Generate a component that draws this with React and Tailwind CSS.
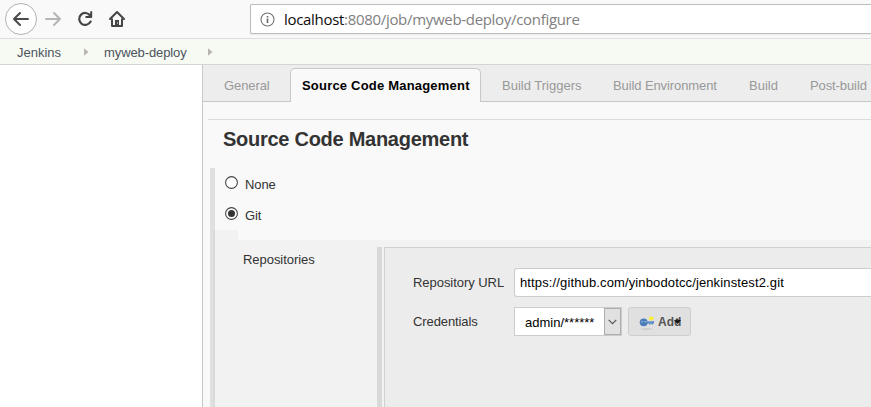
import React from "react";

const TABS_AFTER = [
  { label: "Build Triggers", cls: "w-[79px] ml-[21px]" },
  { label: "Build Environment", cls: "w-[104px] ml-8 tracking-[-0.1px]" },
  { label: "Build", cls: "w-[29px] ml-8" },
  { label: "Post-build", cls: "w-[60px] ml-8 tracking-[-0.1px]" },
];

function Toolbar() {
  return (
    <header className="flex h-[39px] shrink-0 items-start border-b border-[#dedede] bg-[#f9f9f9]">
      <svg width="130" height="38" viewBox="0 0 130 38" fill="none" className="shrink-0">
        <circle cx="21" cy="19" r="15.5" fill="#fff" stroke="#b1b1b1" />
        <path d="M28 19H14M20 13L14 19L20 25" stroke="#4a4a4a" strokeWidth="2" strokeLinecap="round" strokeLinejoin="round" />
        <path d="M46 19H60M54 13L60 19L54 25" stroke="#b5b5b5" strokeWidth="2" strokeLinecap="round" strokeLinejoin="round" />
        <path d="M90.2 15.6A6 6 0 1 0 90.6 21.6" stroke="#454545" strokeWidth="2.2" strokeLinecap="round" />
        <path d="M91.2 12V17H86.2" stroke="#454545" strokeWidth="2" strokeLinecap="round" strokeLinejoin="round" />
        <path d="M91 13.5V17H87.5Z" fill="#454545" />
        <path d="M110 19L117 12L124 19" stroke="#454545" strokeWidth="2" strokeLinecap="round" strokeLinejoin="round" />
        <path d="M112 18.5V26H122V18.5" stroke="#454545" strokeWidth="2" strokeLinejoin="round" />
        <path d="M115 26V20H119V26Z" fill="#454545" />
        <rect x="117" y="22.5" width="1" height="1" fill="#fff" />
      </svg>
      <div className="mt-1 ml-[120px] flex h-[30px] flex-1 items-center rounded-l-xs border border-r-0 border-[#bcbcbc] bg-white pl-[9px] shadow-[0_1px_2px_rgba(0,0,0,0.06)]">
        <svg width="15" height="15" viewBox="0 0 15 15" fill="none" className="shrink-0">
          <circle cx="7.5" cy="7.5" r="6.5" stroke="#737373" strokeWidth="1.1" />
          <path d="M7.5 6.6V11M7.5 4V5.4" stroke="#666" strokeWidth="1.6" />
        </svg>
        <span className="ml-[9px] font-['Open_Sans',sans-serif] text-[15px] leading-5 tracking-[-0.31px] whitespace-nowrap text-[#808080]">
          <span className="text-[#0c0c0d]">localhost</span>:8080/job/myweb-deploy/configure
        </span>
      </div>
    </header>
  );
}

function Crumb() {
  return (
    <svg width="5" height="8" viewBox="0 0 5 8" className="shrink-0">
      <path d="M0 0.3L4.5 4L0 7.7Z" fill="#b9b5b0" />
    </svg>
  );
}

function Breadcrumbs() {
  return (
    <nav className="flex h-[26px] shrink-0 items-center border-b border-[#d3d7cf] bg-[#f6faf2] pl-[17px] text-[#4d545d]">
      <span className="w-[67px] pt-0.5">Jenkins</span>
      <Crumb />
      <span className="ml-[15px] w-[104px] pt-0.5 tracking-[-0.1px]">myweb-deploy</span>
      <Crumb />
    </nav>
  );
}

function Tabs() {
  return (
    <div className="flex h-[37px] shrink-0 border-b border-[#c8c8c8] bg-[#ededed] whitespace-nowrap text-[#999]">
      <span className="ml-[21px] w-[66px] shrink-0 leading-[41px] tracking-[-0.1px]">General</span>
      <div className="mt-[3px] h-[34px] w-[191px] shrink-0 rounded-t-[5px] border border-b-0 border-[#c8c8c8] bg-[#f9f9f9] pl-[11px] leading-[33px] font-bold tracking-[0.2px] text-black shadow-[0_1px_0_#f9f9f9]">
        Source Code Management
      </div>
      {TABS_AFTER.map((t) => (
        <span key={t.label} className={`shrink-0 leading-[41px] ${t.cls}`}>
          {t.label}
        </span>
      ))}
    </div>
  );
}

function Radio({ label, checked }) {
  return (
    <label className="flex h-8 items-start">
      <svg width="13" height="13" viewBox="0 0 13 13" className="shrink-0">
        <circle cx="6.5" cy="6.5" r="5.9" fill="#fff" stroke="#444" strokeWidth="1.1" />
        {checked && <circle cx="6.5" cy="6.5" r="3.5" fill="#333" />}
      </svg>
      <span className="mt-px ml-[7px] leading-4 tracking-[-0.1px]">{label}</span>
    </label>
  );
}

function AddButton() {
  return (
    <div className="ml-1.5 flex h-[29px] w-[63px] items-center rounded-[3px] border border-[#cdcdcd] bg-[#e0e0e0] pl-2.5">
      <svg width="16" height="16" viewBox="0 0 16 16" className="mt-0.5 shrink-0">
        <ellipse cx="7.5" cy="14" rx="6" ry="0.8" fill="#c8c8c8" />
        <path d="M6 6H15V8.5H14V9.5H12.5V8.5H11.5V9.5H10V8.5H6Z" fill="#5a89c4" />
        <ellipse cx="4.7" cy="7.3" rx="4" ry="3.9" fill="#4c7dbb" />
        <path d="M5 6.7H14" stroke="#85abd8" />
        <circle cx="3" cy="6.8" r="1" fill="#86a9d2" />
        <path d="M12 0.8L13 2L14.6 2L14.3 3.3L15 4.8L13.3 4.7L12 6L11 4.7L9.5 4.4L10.4 3L10 1.7L11.4 1.8Z" fill="#fbed38" />
      </svg>
      <span className="relative ml-[3px] text-xs leading-4 font-bold text-[#555]">
        Add
        <svg width="7" height="7" viewBox="0 0 7 7" className="absolute top-1 right-0">
          <path d="M0 2H7L3.5 6Z" fill="#111" />
          <path d="M3 0V3" stroke="#333" />
        </svg>
      </span>
    </div>
  );
}

function Repository() {
  return (
    <div className="flex flex-1 flex-col border-t border-l border-[#d0d0d0] bg-[#ececec] pt-5 pl-7">
      <div className="flex h-[39px] items-start">
        <span className="w-[101px] shrink-0 leading-[29px] tracking-[-0.05px]">Repository URL</span>
        <div className="h-[29px] flex-1 rounded-l-[3px] border border-r-0 border-[#ccc] bg-white pl-[5px] leading-[27px] tracking-[0.13px] whitespace-nowrap text-black">
          https://github.com/yinbodotcc/jenkinstest2.git
        </div>
      </div>
      <div className="flex items-start">
        <span className="w-[101px] shrink-0 leading-[29px] tracking-[-0.1px]">Credentials</span>
        <div className="flex h-[29px] w-[108px] shrink-0 border border-[#ccc] bg-white text-black">
          <span className="w-[89px] pl-2.5 leading-[29px]">admin/******</span>
          <span className="flex w-[17px] items-center justify-center border border-[#adadad] bg-[#e1e1e1]">
            <svg width="9" height="6" viewBox="0 0 9 6" fill="none">
              <path d="M0.7 0.8L4.5 4.6L8.3 0.8" stroke="#555" strokeWidth="1.2" />
            </svg>
          </span>
        </div>
        <AddButton />
      </div>
    </div>
  );
}

export default function App() {
  return (
    <div className="flex h-[407px] w-[871px] flex-col overflow-hidden bg-white font-['Liberation_Sans',Arial,sans-serif] text-[13px] text-[#333]">
      <Toolbar />
      <Breadcrumbs />
      <div className="flex min-h-0 flex-1">
        <aside className="w-[202px] shrink-0 bg-white" />
        <main className="flex min-w-0 flex-1 flex-col border-l border-[#c8c8c8] bg-[#f9f9f9]">
          <Tabs />
          <div className="mt-[17px] ml-[5px] h-[49px] shrink-0 border-t border-[#dcdcdc] pl-[15px]">
            <h1 className="pt-[7px] text-xl leading-6 font-bold tracking-[-0.27px] whitespace-nowrap">Source Code Management</h1>
          </div>
          <div className="ml-[7px] flex min-h-0 flex-1">
            <div className="flex w-[5px] shrink-0 flex-col bg-[#e0e0e0]">
              <div className="mt-[62px] ml-[3px] flex-1 bg-[#dadada]" />
            </div>
            <div className="flex min-w-0 flex-1 flex-col">
              <div className="h-[62px] shrink-0 pt-2 pl-[10px]">
                <Radio label="None" />
                <div className="-mt-px">
                  <Radio label="Git" checked />
                </div>
              </div>
              <div className="h-2.5 w-[23px] shrink-0 bg-[#f2f2f2]" />
              <div className="flex min-h-0 flex-1 bg-[#f2f2f2] pt-[7px]">
                <span className="w-[162px] shrink-0 pt-[5px] pl-7 leading-4 tracking-[-0.05px]">Repositories</span>
                <div className="mr-0.5 w-[5px] shrink-0 bg-[#d9d9d9]" />
                <Repository />
              </div>
            </div>
          </div>
        </main>
      </div>
    </div>
  );
}
